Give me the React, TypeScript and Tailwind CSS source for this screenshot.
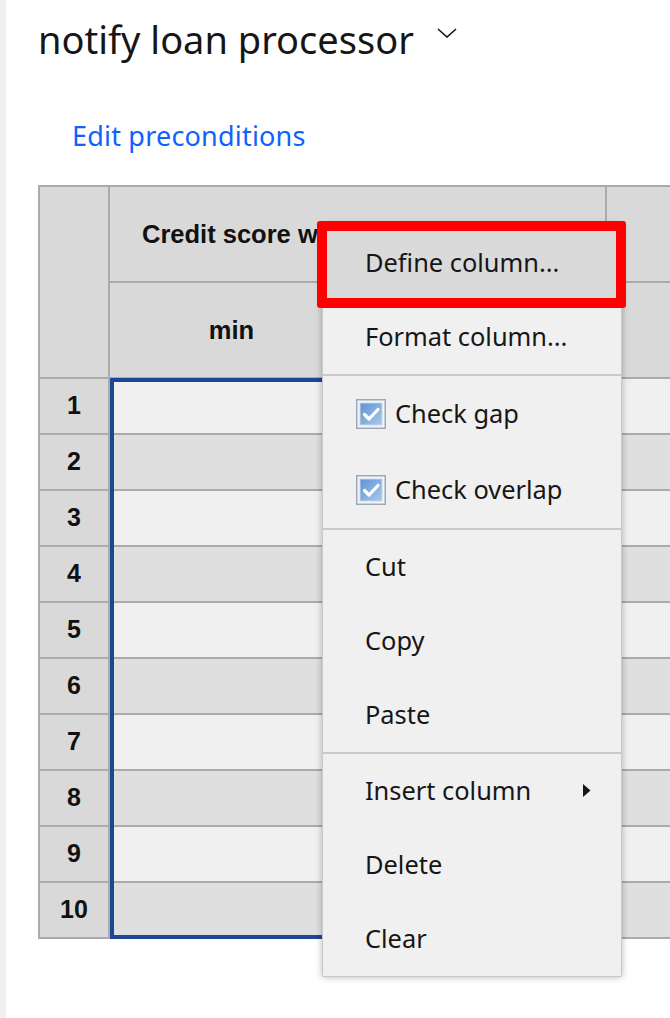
import React from "react";

const plex = { fontFamily: '"Noto Sans", "Open Sans", sans-serif' };
const arial = { fontFamily: '"Liberation Sans", Arial, sans-serif' };

function Checkbox() {
  return (
    <svg width="30" height="30" viewBox="0 0 30 30" className="shrink-0">
      <rect x="0.75" y="0.75" width="28.5" height="28.5" fill="#f4f6f9" stroke="#9ca8b8" strokeWidth="1.5" />
      <defs>
        <linearGradient id="cbg" x1="0" y1="0" x2="1" y2="1">
          <stop offset="0" stopColor="#5f93d3" />
          <stop offset="1" stopColor="#a9c9ee" />
        </linearGradient>
      </defs>
      <rect x="4" y="4" width="22" height="22" fill="url(#cbg)" stroke="#c9d6e6" strokeWidth="1" />
      <path d="M8.5 15.5 L13 20 L22 10.5" fill="none" stroke="#ffffff" strokeWidth="3.2" strokeLinecap="round" strokeLinejoin="round" />
    </svg>
  );
}

function MenuItem({ label, highlighted, check, arrow, tall }: { label: string; highlighted?: boolean; check?: boolean; arrow?: boolean; tall?: boolean }) {
  return (
    <div
      className={`flex items-center text-[25.4px] leading-none text-[#161616] ${tall ? "h-[76px]" : "h-[74px]"} ${check ? "pl-[33px]" : "pl-[42px]"} ${highlighted ? "bg-[#dadada]" : ""}`}
      style={plex}
    >
      {check && <Checkbox />}
      <span className={check ? "ml-[9px]" : ""}>{label}</span>
      {arrow && (
        <svg width="8" height="13" viewBox="0 0 8 13" className="ml-[52px] mb-[2px]">
          <path d="M0 0 L7.5 6.5 L0 13 Z" fill="#161616" />
        </svg>
      )}
    </div>
  );
}

function Sep() {
  return <div className="h-[2px] bg-[#c8c8c8]" />;
}

export default function App() {
  const rows = [1, 2, 3, 4, 5, 6, 7, 8, 9, 10];
  return (
    <div className="relative flex h-[1018px] w-[670px] overflow-hidden bg-white">
      <div className="w-[6px] shrink-0 bg-[#f0f0f0]" />
      <div className="flex min-w-0 flex-1 flex-col pl-[32px]">
        <div className="flex items-start pt-[20px]">
          <div className="text-[38px] leading-[38px] text-[#161616]" style={plex}>
            notify loan processor
          </div>
          <svg width="20" height="10" viewBox="0 0 20 10" className="ml-[23px] mt-[8px]">
            <path d="M1 1 L10 9 L19 1" fill="none" stroke="#161616" strokeWidth="1.6" />
          </svg>
        </div>
        <div className="pl-[34px] pt-[64px] text-[27px] leading-[27px] tracking-[0.2px] text-[#0f62fe]" style={plex}>
          Edit preconditions
        </div>
        <div className="mt-[36px] w-[700px] border-l-2 border-t-2 border-[#ababab]" style={arial}>
          {/* header */}
          <div className="flex">
            <div className="h-[192px] w-[70px] border-b-2 border-r-2 border-[#ababab] bg-[#d9d9d9]" />
            <div className="flex w-[497px] flex-col">
              <div className="flex h-[96px] items-center border-b-2 border-r-2 border-[#ababab] bg-[#d9d9d9] pl-[32px] text-[25.5px] font-bold text-[#111]">
                <span className="whitespace-nowrap">Credit score w</span>
              </div>
              <div className="flex h-[96px]">
                <div className="flex w-[245px] items-center justify-center border-b-2 border-r-2 border-[#ababab] bg-[#d9d9d9] text-[25.5px] font-bold text-[#111]">
                  min
                </div>
                <div className="flex-1 border-b-2 border-r-2 border-[#ababab] bg-[#d9d9d9]" />
              </div>
            </div>
            <div className="flex flex-1 flex-col">
              <div className="h-[96px] border-b-2 border-[#ababab] bg-[#d9d9d9]" />
              <div className="h-[96px] border-b-2 border-[#ababab] bg-[#d9d9d9]" />
            </div>
          </div>
          {rows.map((r) => {
            const bg = r % 2 === 1 ? "bg-[#f0f0f0]" : "bg-[#dfdfdf]";
            return (
              <div key={r} className="flex h-[56px]">
                <div className="flex w-[70px] items-center justify-center border-b-2 border-r-2 border-[#ababab] bg-[#d9d9d9] text-[25px] font-bold text-[#111]">
                  {r}
                </div>
                <div className={`w-[245px] border-b-2 border-r-2 border-[#ababab] ${bg}`} />
                <div className={`w-[252px] border-b-2 border-r-2 border-[#ababab] ${bg}`} />
                <div className={`flex-1 border-b-2 border-[#ababab] ${bg}`} />
              </div>
            );
          })}
        </div>
      </div>

      {/* selected column outline */}
      <div className="pointer-events-none absolute left-[110px] top-[378px] h-[561px] w-[245px] border-[4px] border-[#1d4699]" />

      {/* context menu */}
      <div className="absolute left-[322px] top-[225px] w-[300px] border border-[#c8c8c8] bg-[#f0f0f0] shadow-[0_0_7px_rgba(0,0,0,0.28)]">
        <MenuItem label="Define column..." highlighted />
        <MenuItem label="Format column..." />
        <Sep />
        <MenuItem label="Check gap" check tall />
        <MenuItem label="Check overlap" check tall />
        <Sep />
        <MenuItem label="Cut" />
        <MenuItem label="Copy" />
        <MenuItem label="Paste" />
        <Sep />
        <MenuItem label="Insert column" arrow />
        <MenuItem label="Delete" />
        <MenuItem label="Clear" />
      </div>

      {/* red annotation box */}
      <div className="pointer-events-none absolute left-[317px] top-[221px] h-[87px] w-[309px] rounded-[3px] border-[10px] border-[#ff0000]" />
    </div>
  );
}
